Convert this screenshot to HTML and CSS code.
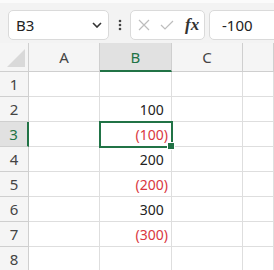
FILE: index.html
```html
<!DOCTYPE html>
<html lang="ja">
<head>
<meta charset="UTF-8" />
<title>Sheet</title>
<link rel="stylesheet" href="styles.css">
</head>
<body>

<div class="toolbar">
  <div class="namebox">
    <span>B3</span>
    <svg class="chevron" width="10" height="6" viewBox="0 0 10 6"><path d="M1 1 L5 5 L9 1" fill="none" stroke="#333" stroke-width="1.6"/></svg>
  </div>
  <div class="grip">
    <svg width="4" height="12" viewBox="0 0 4 12"><circle cx="2" cy="2" r="1.3" fill="#444"/><circle cx="2" cy="6" r="1.3" fill="#444"/><circle cx="2" cy="10" r="1.3" fill="#444"/></svg>
  </div>
  <div class="fx-tools">
    <svg width="12" height="12" viewBox="0 0 12 12"><path d="M1 1 L11 11 M11 1 L1 11" stroke="#bdbdbd" stroke-width="1.2"/></svg>
    <svg width="14" height="10" viewBox="0 0 14 10"><path d="M1 5 L5 9 L13 1" fill="none" stroke="#bdbdbd" stroke-width="1.2"/></svg>
    <span class="fx">fx</span>
  </div>
  <div class="formula">-100</div>
</div>

<div class="sheet">
  <div class="cell corner">
    <svg width="18" height="18" viewBox="0 0 18 18"><polygon points="18,0 18,18 0,18" fill="#d9d9d9"/></svg>
  </div>
  <div class="cell colhead">A</div>
  <div class="cell colhead selected">B</div>
  <div class="cell colhead">C</div>
  <div class="cell colhead"></div>

  <div class="cell rowhead">1</div>
  <div class="cell"></div><div class="cell"></div><div class="cell"></div><div class="cell"></div>

  <div class="cell rowhead">2</div>
  <div class="cell"></div><div class="cell num">100<span class="pad">)</span></div><div class="cell"></div><div class="cell"></div>

  <div class="cell rowhead selected">3</div>
  <div class="cell"></div><div class="cell num neg active">(100)</div><div class="cell"></div><div class="cell"></div>

  <div class="cell rowhead">4</div>
  <div class="cell"></div><div class="cell num">200<span class="pad">)</span></div><div class="cell"></div><div class="cell"></div>

  <div class="cell rowhead">5</div>
  <div class="cell"></div><div class="cell num neg">(200)</div><div class="cell"></div><div class="cell"></div>

  <div class="cell rowhead">6</div>
  <div class="cell"></div><div class="cell num">300<span class="pad">)</span></div><div class="cell"></div><div class="cell"></div>

  <div class="cell rowhead">7</div>
  <div class="cell"></div><div class="cell num neg">(300)</div><div class="cell"></div><div class="cell"></div>

  <div class="cell rowhead">8</div>
  <div class="cell"></div><div class="cell"></div><div class="cell"></div><div class="cell"></div>
</div>

</body>
</html>
```

FILE: styles.css
```css
* {
  box-sizing: border-box;
}
body {
  margin: 0;
  width: 274px;
  height: 270px;
  overflow: hidden;
  background: #fff;
  font-family: "Noto Sans", "Noto Sans CJK JP", sans-serif;
  color: #222;
}
.toolbar {
  display: flex;
  align-items: center;
  height: 43px;
  padding: 7px 0 3px 8px;
  background: #f3f3f3;
  border-top: 3px solid #fbfbfb;
}
.namebox {
  display: flex;
  align-items: center;
  justify-content: space-between;
  width: 101px;
  height: 30px;
  padding: 0 6px 0 7px;
  background: #fff;
  border: 1px solid #dadada;
  border-radius: 5px;
  font-size: 15px;
}
.grip {
  display: flex;
  justify-content: center;
  width: 21px;
}
.fx-tools {
  display: flex;
  align-items: center;
  gap: 10px;
  width: 75px;
  height: 30px;
  padding-left: 7px;
  background: #fff;
  border: 1px solid #dadada;
  border-radius: 5px;
}
.fx {
  font-family: "Liberation Serif", serif;
  font-style: italic;
  font-weight: bold;
  font-size: 17px;
  color: #333;
  margin-left: 1px;
}
.formula {
  flex: 1;
  height: 30px;
  margin-left: 4px;
  margin-right: -6px;
  padding-left: 12px;
  line-height: 28px;
  background: #fff;
  border: 1px solid #dadada;
  border-radius: 5px;
  font-size: 15px;
}
.sheet {
  display: grid;
  grid-template-columns: 29px 71px 72px 71px 1fr;
  grid-template-rows: 29px;
  grid-auto-rows: 25px;
}
.cell {
  border-right: 1px solid #dedede;
  border-bottom: 1px solid #dedede;
  font-size: 14px;
}
.corner {
  display: flex;
  align-items: flex-end;
  justify-content: flex-end;
  padding: 0 3px 4px 0;
  background: #f5f5f5;
  border-color: #cfcfcf;
}
.colhead {
  display: flex;
  align-items: center;
  justify-content: center;
  background: #f5f5f5;
  border-color: #cfcfcf;
  color: #444;
  font-size: 15px;
}
.rowhead {
  display: flex;
  align-items: center;
  justify-content: center;
  background: #f5f5f5;
  border-color: #cfcfcf;
  color: #444;
  font-size: 15px;
}
.colhead.selected {
  background: #e1e1e1;
  color: #217346;
  border-bottom: 2px solid #217346;
}
.rowhead.selected {
  background: #e1e1e1;
  color: #217346;
  border-right: 2px solid #217346;
}
.num {
  display: flex;
  align-items: center;
  justify-content: flex-end;
  padding-right: 3px;
}
.neg {
  color: #d9363e;
}
.pad {
  visibility: hidden;
}
.active {
  position: relative;
  outline: 2px solid #217346;
  outline-offset: -1px;
}
.active::after {
  content: "";
  position: absolute;
  right: -4px;
  bottom: -4px;
  width: 6px;
  height: 6px;
  background: #217346;
  border: 1px solid #fff;
}
```
